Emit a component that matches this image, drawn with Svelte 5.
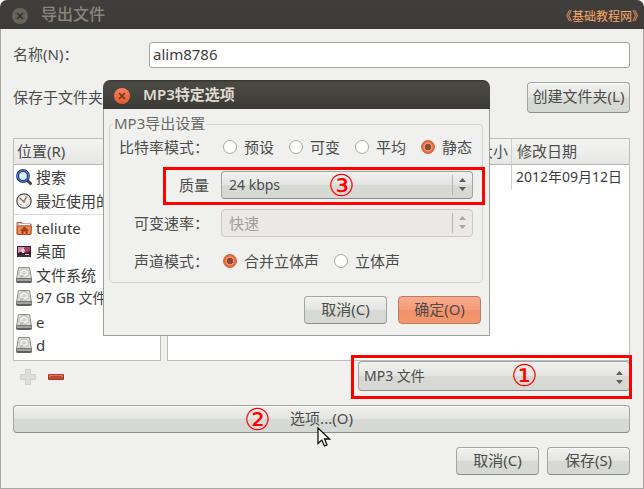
<script>
  let name = $state('alim8786');
  let mode = $state('静态');
  let channel = $state('合并立体声');
  const modes = ['预设', '可变', '平均', '静态'];
  const channels = ['合并立体声', '立体声'];
  const shortcuts = [
    { icon: 'search', text: '搜索' },
    { icon: 'clock', text: '最近使用的' }
  ];
  const places = [
    { icon: 'home', text: 'teliute' },
    { icon: 'desktop', text: '桌面' },
    { icon: 'disk', text: '文件系统' },
    { icon: 'disk', text: '97 GB 文件', small: true },
    { icon: 'disk', text: 'e' },
    { icon: 'disk', text: 'd' }
  ];
</script>

{#snippet icon(kind)}
  <svg class="icon" viewBox="0 0 16 16" aria-hidden="true">
    {#if kind === 'search'}
      <path d="M11 11l3.500 3.500" stroke="#444" stroke-width="3" stroke-linecap="round" />
      <circle cx="7" cy="7" r="5.4" fill="#dfe9f6" stroke="#1f3f86" stroke-width="3" />
      <circle cx="7" cy="7" r="5.6" fill="none" stroke="#4f79c4" stroke-width="1" />
      <path d="M4.5 6.5q.8-2 3-2.2" fill="none" stroke="#fff" stroke-width="1.3" />
    {:else if kind === 'clock'}
      <circle cx="8" cy="8" r="7.2" fill="#f3f3f0" stroke="#4d4d4b" stroke-width="1.200" />
      <circle cx="8" cy="8" r="5.4" fill="none" stroke="#a9a9a6" stroke-width="1" stroke-dasharray="1 1.8" />
      <path d="M3.500 5L8 8.600l2.600-5" fill="none" stroke="#666" stroke-width="1.200" />
      <circle cx="8" cy="8.6" r="1.5" fill="#c9776c" />
      <path d="M4 11.500h2" stroke="#888" />
    {:else if kind === 'home'}
      <path d="M1 14V2.500h5l1.500 1.500H15V14z" fill="#d8c6b8" stroke="#9b6650" />
      <path d="M3 4.500h11" stroke="#fff" />
      <path d="M1.500 6H15.500L14.800 14.500H1.200z" fill="#f08a52" stroke="#b5502a" />
      <path d="M8.500 6.500l4.500 4h-1.500v3.500H9.500v-2.500h-2v2.500H5.500v-3.500H4z" fill="#a33d1a" />
    {:else if kind === 'desktop'}
      <path d="M1 3h14v11H1z" fill="#3b1a2c" />
      <path d="M2 4h7l-2 4-5 2z" fill="#d893a8" />
      <path d="M9 4h5v4L8 10z" fill="#a8446a" />
      <path d="M5 7l2-2 2 2-1 3H6z" fill="#f2d2d6" />
      <path d="M1 12h14v2H1z" fill="#39373a" />
      <path d="M9 11h4v1H9z" fill="#dcbac4" />
    {:else}
      <path d="M2.500 .600h11L15.400 11.500H.600z" fill="#dfdfdb" stroke="#8b8b88" />
      <ellipse cx="8" cy="6" rx="5" ry="4.200" fill="#efefec" stroke="#b4b4b0" />
      <ellipse cx="8" cy="5.700" rx="1.800" ry="1.300" fill="#dcdcd8" stroke="#bbb" stroke-width=".6" />
      <path d="M7 8l-3 3" stroke="#a8a8a4" stroke-width="1.200" />
      <path d="M.500 11.500h15v3.700H.500z" fill="#a2a29f" stroke="#777" />
      <path d="M1 15h14" stroke="#3c3c3c" stroke-width="1.200" />
    {/if}
  </svg>
{/snippet}

{#snippet arrows()}
  <svg class="arrows" viewBox="0 0 7 13" aria-hidden="true">
    <path d="M3.500 0L7 4H0zM3.500 13L7 9H0z" fill="currentColor" />
  </svg>
{/snippet}

{#snippet cross()}
  <svg viewBox="0 0 16 16" aria-hidden="true"><path d="M5 5l6 6M11 5l-6 6" stroke="currentColor" stroke-width="1.500" /></svg>
{/snippet}

<div class="window">
  <header class="bar">
    <button class="close" aria-label="关闭">{@render cross()}</button>
    <h1>导出文件</h1>
    <span class="site">《基础教程网》</span>
  </header>

  <main>
    <div class="row">
      <label for="name">名称(N)：</label>
      <input id="name" type="text" bind:value={name} />
    </div>

    <div class="row folder">
      <span>保存于文件夹</span>
      <button class="btn tall">创建文件夹(L)</button>
    </div>

    <div class="panes">
      <section class="places">
        <h2>位置(R)</h2>
        <ul>
          {#each shortcuts as item}
            <li>{@render icon(item.icon)}{item.text}</li>
          {/each}
        </ul>
        <ul class="drives">
          {#each places as item}
            <li class:small={item.small}>{@render icon(item.icon)}{item.text}</li>
          {/each}
        </ul>
      </section>
      <section class="files">
        <table>
          <thead>
            <tr><th class="fill"></th><th class="size">大小</th><th class="date">修改日期</th></tr>
          </thead>
          <tbody>
            <tr><td></td><td></td><td class="date small">2012年09月12日</td></tr>
          </tbody>
        </table>
      </section>
    </div>

    <div class="tools">
      <button class="tool" aria-label="添加">
        <svg viewBox="0 0 16 16"><path d="M5.500.500h5v5h5v5h-5v5h-5v-5h-5v-5h5z" fill="#dcdedb" stroke="#cfd1ce" /></svg>
      </button>
      <button class="tool" aria-label="移除">
        <svg viewBox="0 0 16 16"><path d="M.500 5.500h15v5H.500z" fill="#bd4a33" stroke="#a93c28" /><path d="M1.500 8V6.500h13V8" fill="none" stroke="#dc7a62" /></svg>
      </button>
      <div class="combo filter">
        <select class="small" aria-label="文件类型"><option>MP3 文件</option></select>
        {@render arrows()}
        <div class="mark"></div>
        <span class="num">①</span>
      </div>
    </div>

    <div class="options">
      <button class="btn">选项...(O)</button>
      <span class="num">②</span>
      <svg class="pointer" viewBox="0 0 14 20" aria-hidden="true">
        <path d="M1 1v15.500l3.800-3.500 2.600 6 2.600-1.100-2.500-5.900h5z" fill="#fff" stroke="#111" stroke-width="1.300" />
      </svg>
    </div>

    <div class="actions">
      <button class="btn">取消(C)</button>
      <button class="btn">保存(S)</button>
    </div>
  </main>

  <div class="dialog" role="dialog" aria-labelledby="dialog-title">
    <header class="bar">
      <button class="close active" aria-label="关闭">{@render cross()}</button>
      <h1 id="dialog-title">MP3特定选项</h1>
    </header>
    <form>
      <fieldset>
        <legend>MP3导出设置</legend>
        <div class="grid">
          <span class="name">比特率模式：</span>
          <div class="radios">
            {#each modes as m}
              <label><input type="radio" name="mode" value={m} bind:group={mode} />{m}</label>
            {/each}
          </div>
          <label class="name" for="quality">质量</label>
          <div class="combo split">
            <select id="quality" class="small"><option>24 kbps</option></select>
            {@render arrows()}
            <div class="mark"></div>
            <span class="num">③</span>
          </div>
          <label class="name" for="speed">可变速率：</label>
          <div class="combo split off">
            <select id="speed" disabled><option>快速</option></select>
            {@render arrows()}
          </div>
          <span class="name">声道模式：</span>
          <div class="radios">
            {#each channels as c}
              <label><input type="radio" name="channel" value={c} bind:group={channel} />{c}</label>
            {/each}
          </div>
        </div>
      </fieldset>
      <div class="confirm">
        <button type="button" class="btn">取消(C)</button>
        <button type="button" class="btn primary">确定(O)</button>
      </div>
    </form>
  </div>
</div>

<style>
  :global(body) { background: #fff; }
  .window, .window * { box-sizing: border-box; }
  .window {
    position: relative;
    font: 15px/20px "Noto Sans", "Noto Sans CJK SC", sans-serif;
    color: #4c4c4c;
    background: #f0f1ee;
    border-radius: 7px 7px 0 0;
  }
  button, input, select { font: inherit; color: inherit; margin: 0; }
  h1, h2, ul { margin: 0; padding: 0; list-style: none; }
  .small { font-size: 14px; }

  .bar {
    display: flex;
    align-items: center;
    height: 29px;
    padding: 0 0 1px 12px;
    background: linear-gradient(#403f3c, #3c3b39);
    border-radius: 7px 7px 0 0;
  }
  .bar h1 { margin-left: 13px; font-size: 16px; font-weight: 500; line-height: 20px; color: #8b857b; }
  .close {
    width: 16px; height: 16px; margin-top: 3px; padding: 0; border: 0; border-radius: 50%;
    background: #69645a; color: #302f2c;
  }
  .close svg { display: block; }
  .active { background: linear-gradient(#f4845e, #e5592b); color: #6d3019; }
  .site { margin-left: auto; padding-top: 5px; font-size: 12px; color: #f9a767; }

  main { padding: 13px 13px 13px 12px; border: 1px solid #aaa6a4; border-top: 0; }
  .row { display: flex; align-items: center; }
  .row label { width: 136px; line-height: 18px; padding-bottom: 2px; }
  .row input {
    flex: 1; min-width: 0; height: 26px; padding: 0 3px 2px; background: #fff; color: #3c3c3c;
    border: 1px solid #a5a5a2; border-radius: 3px; outline: 0;
  }
  .folder { justify-content: space-between; margin-top: 14px; }
  .folder span { padding-bottom: 2px; }
  .btn {
    height: 28px; min-width: 83px; padding: 0 4px 2px;
    border: 1px solid #a3a39f; border-bottom-color: #8c8c89; border-radius: 4px;
    background: linear-gradient(#f1f2f0, #e4e5e2 48%, #d7d9d4 52%, #d6d8d3);
    box-shadow: inset 0 1px #fafafa;
    line-height: 20px;
  }
  .tall { height: 31px; min-width: 103px; padding-bottom: 3px; }

  .panes { display: flex; gap: 6px; min-height: 223px; margin-top: 25px; }
  .places, .files { background: #fff; border: 1px solid #bdbdba; color: #3c3c3c; }
  .places { display: flex; flex-direction: column; width: 148px; }
  .files { flex: 1; }
  h2, th {
    height: 26px; padding: 0 3px; font-size: 15px; font-weight: 400; line-height: 25px; text-align: left;
    color: #4c4c4c; background: linear-gradient(#f4f4f2, #e6e7e4); border-bottom: 1px solid #b5b5b2;
  }
  li { display: flex; align-items: center; gap: 4px; height: 24px; padding-left: 2px; white-space: nowrap; }
  .drives { flex: 1; display: flex; flex-direction: column; margin-top: 1px; padding: 1px 0 3px; border-top: 1px solid #dcdcda; }
  .drives li { flex: 1; height: auto; }
  .icon { width: 16px; height: 16px; flex: none; }

  table { width: 100%; border-collapse: separate; border-spacing: 0; table-layout: fixed; }
  td { height: 25px; padding: 0; }
  .size { width: 60px; text-align: right; }
  .date { width: 118px; padding: 0 0 0 5px; border-left: 1px solid #cfcfcc; white-space: nowrap; }
  td.date { padding: 0 0 2px 4px; }

  .tools { display: flex; align-items: flex-start; gap: 12px; }
  .tool { width: 16px; height: 16px; margin-top: 8px; padding: 0; border: 0; background: none; }
  .tool:first-child { margin-left: 7px; }
  .tool svg { display: block; }

  .combo { position: relative; display: flex; }
  .combo select {
    width: 100%; height: 28px; padding: 0 24px 0 7px; appearance: none; outline: 0;
    border: 1px solid #a3a39f; border-bottom-color: #8c8c89; border-radius: 4px;
    background: linear-gradient(#f1f2f0, #e4e5e2 48%, #d7d9d4 52%, #d6d8d3);
  }
  .filter { width: 272px; margin-left: auto; }
  .filter select { height: 30px; padding-left: 5px; }
  .arrows { position: absolute; right: 7px; top: 7px; width: 7px; height: 13px; color: #5c5c5a; pointer-events: none; }
  .filter .arrows { top: 10px; }
  .split::after { content: ""; position: absolute; right: 20px; top: 4px; bottom: 4px; border-left: 1px solid #b3b4b0; }
  .combo.off select { color: #a09f9a; opacity: 1; background: #ece8e5; border-color: #cdc6c3; }
  .off .arrows { color: #aaa8a4; }
  .mark { position: absolute; border: 3px solid #f00; inset: -6px -2px -8px -7px; pointer-events: none; }
  .split .mark { inset: -4px -12px -6px -58px; }
  .num {
    position: absolute; left: 153px; top: 0; line-height: 30px; font-size: 30px;
    font-family: "DejaVu Sans", sans-serif; color: #f00; pointer-events: none;
  }
  .split .num { left: 107px; }

  .options { position: relative; margin-top: 14px; display: flex; }
  .options .btn { flex: 1; }
  .options .num { left: 231px; }
  .pointer { position: absolute; left: 304px; top: 22px; width: 14px; height: 20px; }
  .actions { display: flex; justify-content: flex-end; gap: 8px; margin-top: 14px; }

  .dialog {
    position: absolute; left: 103px; top: 80px; width: 387px;
    background: #f0f1ee; border-radius: 7px 7px 0 0;
  }
  .dialog .bar { padding-left: 11px; background: linear-gradient(#35342f, #4a4942 10%, #45443e 50%, #3b3a37); }
  .dialog h1 { font-size: 15px; font-weight: 600; color: #dfdbd2; }
  form { padding: 5px 6px 11px 5px; border: 1px solid #9f9f9c; border-top: 0; }
  fieldset { margin: 0; padding: 0 9px 7px; border: 1px solid #d3d4d0; border-radius: 4px; min-width: 0; }
  legend { margin-left: -6px; padding: 0 1px; height: 20px; line-height: 18px; color: #6b6b68; }
  .grid { display: grid; grid-template-columns: 90px 1fr; column-gap: 12px; row-gap: 10px; align-items: center; grid-auto-rows: 28px; margin-top: -1px; }
  .name { text-align: right; white-space: nowrap; }
  .radios { display: flex; gap: 15px; padding-left: 1px; }
  .radios label { display: flex; align-items: center; gap: 7px; white-space: nowrap; }
  input[type="radio"] {
    appearance: none; width: 14px; height: 14px; border: 1px solid #a6a6a3; border-radius: 50%; background: #fff;
  }
  input[type="radio"]:checked {
    border-color: #c9653f;
    background: radial-gradient(circle, #8a4a35 0 3px, #f4946c 3px 4px, #e8673b 5px);
  }
  .radios { padding-left: 2px; }
  .confirm { display: flex; justify-content: flex-end; gap: 11px; margin-top: 13px; padding-right: 2px; }
  .primary { background: linear-gradient(#f8ab8e, #f69c79 48%, #f29069 52%, #f3976f); border-color: #b87c63; box-shadow: none; }
</style>
